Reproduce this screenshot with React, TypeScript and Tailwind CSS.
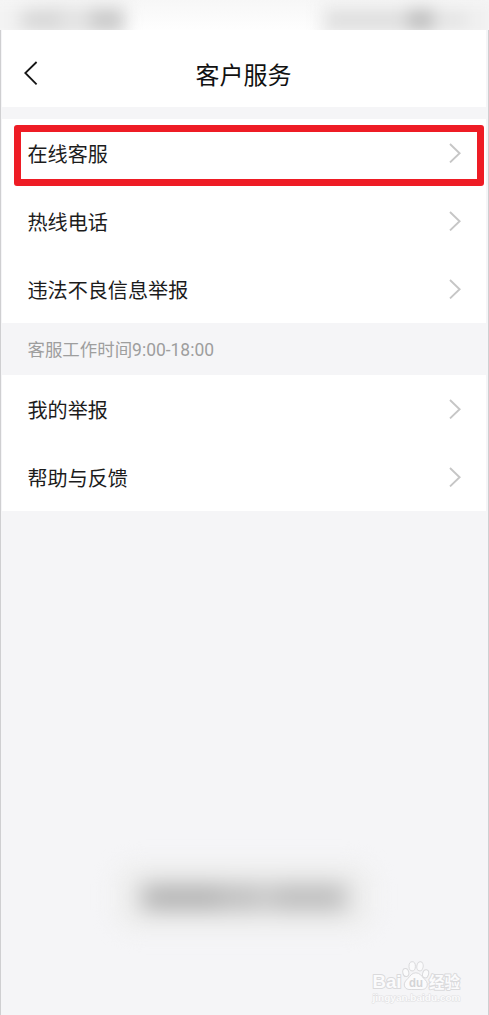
import React from 'react';

interface MenuRowProps {
  label: string;
  highlighted?: boolean;
}

function MenuRow({ label, highlighted = false }: MenuRowProps) {
  return (
    <button className="relative flex h-[68px] w-full items-center justify-between pl-[25.5px] pr-[25px] text-left">
      <span className="pt-[3px] text-[20.1px] leading-7 text-[#1c1c1c]">{label}</span>
      <svg className="h-5 w-3" viewBox="0 0 12 20" fill="none" stroke="#c6c6c6" strokeWidth="1.9">
        <path d="M1 1 L10.6 10.2 L1 19.4" />
      </svg>
      {highlighted && (
        <span className="absolute left-3 top-[5.5px] h-[61.5px] w-[470px] rounded-[3px] border-[7px] border-[#ee1c25]" />
      )}
    </button>
  );
}

function Watermark() {
  return (
    <svg className="h-[50px] w-[100px]" viewBox="0 0 100 50">
      <g
        fill="#fbfbfc"
        stroke="#dadadc"
        strokeWidth="2"
        strokeLinejoin="round"
        paintOrder="stroke"
        fontFamily="'Liberation Sans', 'Noto Sans CJK SC', sans-serif"
        fontWeight="700"
      >
        <text x="4.5" y="30" fontSize="18.5" textLength="29" lengthAdjust="spacingAndGlyphs">Bai</text>
        <text x="61" y="30" fontSize="15.5" textLength="31">经验</text>
        <text
          x="4.5"
          y="43"
          fontSize="9.5"
          strokeWidth="1"
          stroke="#e0e0e2"
          textLength="88"
          lengthAdjust="spacingAndGlyphs"
        >
          jingyan.baidu.com
        </text>
      </g>
      <g fill="#fbfbfc" stroke="#dadadc" strokeWidth="1">
        <path d="M47.8 14.8c4 0 5.6 3 7.8 5.4c2.4 2.3 4.3 4.3 3.6 7.3c-.8 3.5-4 4.3-7 4h-9c-3 .3-6-.5-6.8-3.6c-.7-3 1.2-5.2 3.6-7.5c2.2-2.4 3.8-5.6 7.8-5.6Z" />
        <ellipse cx="37.8" cy="14.5" rx="3" ry="4.1" transform="rotate(-12 37.8 14.5)" />
        <ellipse cx="44.2" cy="8.3" rx="3.2" ry="4.6" />
        <ellipse cx="52" cy="8.3" rx="3.2" ry="4.6" transform="rotate(8 52 8.3)" />
        <ellipse cx="57.6" cy="15.8" rx="3" ry="4.1" transform="rotate(15 57.6 15.8)" />
      </g>
      <text
        x="41"
        y="28.5"
        fontSize="13"
        fontWeight="700"
        fill="#d4d4d6"
        fontFamily="'Liberation Sans', sans-serif"
        textLength="14"
        lengthAdjust="spacingAndGlyphs"
      >
        du
      </text>
    </svg>
  );
}

export default function App() {
  return (
    <div className="flex h-[1015px] w-[489px] flex-col overflow-hidden bg-[#f5f5f7] font-['Roboto','Noto_Sans_CJK_SC',sans-serif]">
      {/* Obscured status bar */}
      <div className="flex h-[30px] shrink-0 justify-between overflow-hidden bg-linear-to-b from-[#f7f7f7] to-[#fefefe]">
        <div className="-ml-3 flex h-10 w-[140px] shrink-0 items-center bg-linear-to-r from-[#f5f5f5] via-[#ececec] to-[#f0f0f0] pl-[34px] blur-[7px]">
          <div className="h-4 w-[40px] bg-[#d4d4d4] blur-[4px]" />
          <div className="h-3 w-[28px] bg-[#dedede] blur-[4px]" />
          <div className="h-5 w-[33px] bg-[#c8c8c8] blur-[4px]" />
        </div>
        <div className="-mr-2 flex h-10 w-[178px] shrink-0 items-center bg-[#f1f1f1] pl-2 blur-[7px]">
          <div className="h-4 w-[80px] bg-[#dcdcdc] blur-[4px]" />
          <div className="h-5 w-[28px] bg-[#bdbdbd] blur-[4px]" />
          <div className="h-3 w-[32px] bg-[#e0e0e0] blur-[4px]" />
        </div>
      </div>

      <div className="flex flex-1 flex-col border-x border-[#cfcfd1] pl-px pr-[2px]">
        {/* Header */}
        <header className="grid h-[77px] shrink-0 grid-cols-[60px_1fr_60px] items-center bg-white">
          <button className="pl-[22px] pt-[8px]" aria-label="返回">
            <svg className="h-6 w-[14px]" viewBox="0 0 14 24" fill="none" stroke="#151515" strokeWidth="1.8">
              <path d="M12.6 1 L1.3 12 L12.6 23.3" />
            </svg>
          </button>
          <h1 className="pr-px pt-[14px] text-center text-[24px] leading-8 text-[#111111]">客户服务</h1>
        </header>

        <div className="flex flex-col pt-3">
          <section className="bg-white">
            <MenuRow label="在线客服" highlighted />
            <MenuRow label="热线电话" />
            <MenuRow label="违法不良信息举报" />
          </section>
          <p className="flex h-[52px] items-center pl-[25.5px] pt-[3px] text-[17.45px] text-[#9e9e9e]">
            客服工作时间9:00-18:00
          </p>
          <section className="bg-white">
            <MenuRow label="我的举报" />
            <MenuRow label="帮助与反馈" />
          </section>
        </div>

        <div className="flex flex-1 flex-col items-center justify-end">
          {/* Obscured toast */}
          <div className="flex h-[72px] w-[264px] items-center justify-center rounded-[24px] bg-[#f0f0f0] blur-[9px]">
            <div className="flex h-[36px] w-[218px] items-center justify-center bg-[#e2e2e2] blur-[6px]">
              <div className="flex h-[23px] w-[200px] bg-[#cacaca] blur-[4px]">
                <div className="w-[76px] bg-[#b0b0b0]" />
                <div className="w-[36px] bg-[#bcbcbc]" />
                <div className="w-[20px] bg-[#c8c8c8]" />
                <div className="flex-1 bg-[#bababa]" />
              </div>
            </div>
          </div>
          <div className="flex w-full justify-end pb-[7px] pr-[18px] pt-[25px]">
            <Watermark />
          </div>
        </div>
      </div>
    </div>
  );
}
